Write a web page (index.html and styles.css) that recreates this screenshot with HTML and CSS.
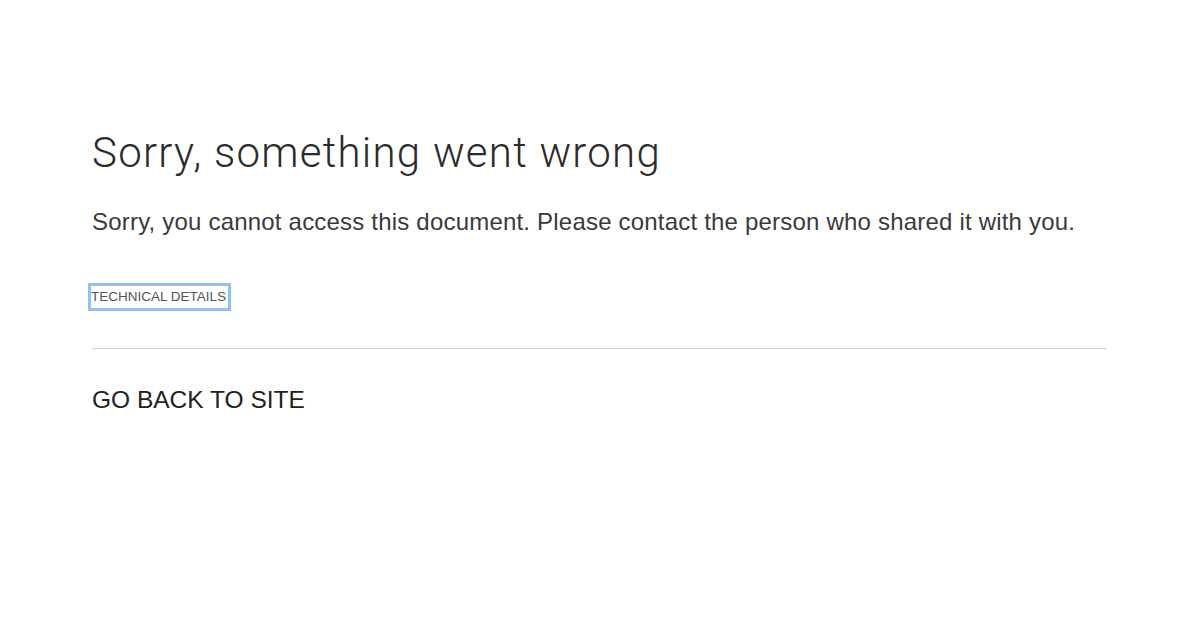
FILE: index.html
```html
<!DOCTYPE html>
<html>
<head>
<meta charset="utf-8">
<link rel="stylesheet" href="styles.css">
</head>
<body>
<main class="page">
  <h1 class="title">Sorry, something went wrong</h1>
  <p class="message">Sorry, you cannot access this document. Please contact the person who shared it with you.</p>
  <div class="details-row">
    <button class="details">TECHNICAL DETAILS</button>
  </div>
  <hr class="divider">
  <a class="back" href="#">GO BACK TO SITE</a>
</main>
</body>
</html>
```
FILE: styles.css
```css
html, body {
  margin: 0;
  padding: 0;
  background: #ffffff;
}
body {
  font-family: "Liberation Sans", Arial, sans-serif;
  color: #333333;
}
.page {
  display: flex;
  flex-direction: column;
  align-items: flex-start;
  padding: 125px 92px 0 92px;
}
.title {
  margin: 0;
  font-family: Roboto, "Liberation Sans", Arial, sans-serif;
  font-size: 42px;
  font-weight: 300;
  letter-spacing: 1.25px;
  line-height: 56px;
  color: #2b2b2b;
}
.message {
  margin: 26px 0 0 0;
  font-size: 24px;
  letter-spacing: 0.2px;
  line-height: 30px;
  color: #3a3a3a;
}
.details-row {
  margin-top: 49px;
}
.details {
  font-family: "Liberation Sans", Arial, sans-serif;
  font-size: 13.5px;
  color: #555555;
  background: none;
  border: none;
  padding: 3px 2px 3px 0;
  margin: 0 0 0 -1px;
  outline: 3px solid #8ec2f5;
  line-height: 16px;
}
.divider {
  align-self: stretch;
  margin: 40px 0 0 0;
  border: none;
  border-top: 1px solid #cfcfcf;
  height: 0;
}
.back {
  margin-top: 36px;
  font-size: 24.5px;
  line-height: 30px;
  color: #222222;
  text-decoration: none;
}
```
